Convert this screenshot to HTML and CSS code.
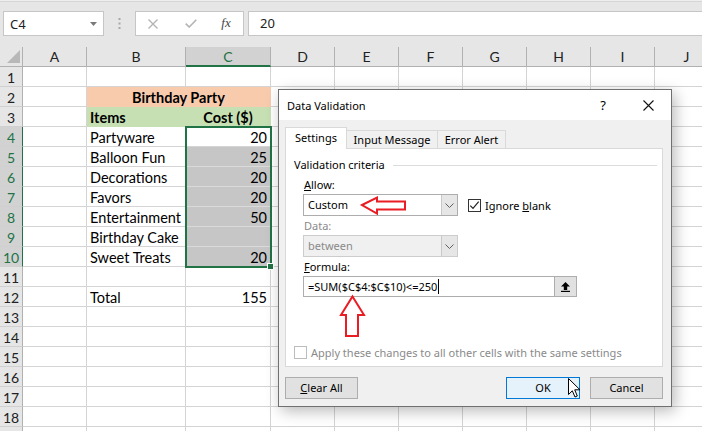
FILE: index.html
```html
<!DOCTYPE html>
<html>
<head>
<meta charset="utf-8">
<link rel="stylesheet" href="styles.css">
</head>
<body>
<div class="fbar">
  <div class="namebox"><span>C4</span><svg class="nbcaret" width="7" height="4" viewBox="0 0 7 4"><path d="M0 0h7L3.5 4z" fill="#7a7a7a"/></svg></div>
  <div class="dots"><svg width="3" height="11" viewBox="0 0 3 11"><rect x="0.5" y="0" width="2" height="2" fill="#a8a8a8"/><rect x="0.5" y="4.5" width="2" height="2" fill="#a8a8a8"/><rect x="0.5" y="9" width="2" height="2" fill="#a8a8a8"/></svg></div>
  <div class="fxbox">
    <span class="fxi fx1"><svg width="10" height="10" viewBox="0 0 10 10"><path d="M.5.5l9 9M9.5.5l-9 9" stroke="#b4b4b4" stroke-width="1.4"/></svg></span>
    <span class="fxi fx2"><svg width="12" height="9" viewBox="0 0 12 9"><path d="M.7 4.6 4.2 8 11.3.7" fill="none" stroke="#b4b4b4" stroke-width="1.6"/></svg></span>
    <span class="fxi fx3">fx</span>
  </div>
  <div class="finput">20</div>
</div>

<div class="sheet">
  <div class="ch corner"><svg width="13" height="13" viewBox="0 0 13 13"><path d="M13 0v13H0z" fill="#b8b8b8"/></svg></div>
  <div class="ch">A</div><div class="ch">B</div><div class="ch s">C</div><div class="ch">D</div><div class="ch">E</div><div class="ch">F</div><div class="ch">G</div><div class="ch">H</div><div class="ch">I</div><div class="ch">J</div>

  <div class="rh">1</div><div></div><div></div><div></div><div></div><div></div><div></div><div></div><div></div><div></div><div></div>
  <div class="rh">2</div><div></div><div class="title2">Birthday Party</div><div></div><div></div><div></div><div></div><div></div><div></div><div></div>
  <div class="rh">3</div><div></div><div class="hd3">Items</div><div class="hd3 ctr">Cost ($)</div><div></div><div></div><div></div><div></div><div></div><div></div><div></div>
  <div class="rh s">4</div><div></div><div>Partyware</div><div class="n">20</div><div></div><div></div><div></div><div></div><div></div><div></div><div></div>
  <div class="rh s">5</div><div></div><div>Balloon Fun</div><div class="n g">25</div><div></div><div></div><div></div><div></div><div></div><div></div><div></div>
  <div class="rh s">6</div><div></div><div>Decorations</div><div class="n g">20</div><div></div><div></div><div></div><div></div><div></div><div></div><div></div>
  <div class="rh s">7</div><div></div><div>Favors</div><div class="n g">20</div><div></div><div></div><div></div><div></div><div></div><div></div><div></div>
  <div class="rh s">8</div><div></div><div>Entertainment</div><div class="n g">50</div><div></div><div></div><div></div><div></div><div></div><div></div><div></div>
  <div class="rh s">9</div><div></div><div>Birthday Cake</div><div class="n g"></div><div></div><div></div><div></div><div></div><div></div><div></div><div></div>
  <div class="rh s">10</div><div></div><div>Sweet Treats</div><div class="n g">20</div><div></div><div></div><div></div><div></div><div></div><div></div><div></div>
  <div class="rh">11</div><div></div><div></div><div></div><div></div><div></div><div></div><div></div><div></div><div></div><div></div>
  <div class="rh">12</div><div></div><div>Total</div><div class="n">155</div><div></div><div></div><div></div><div></div><div></div><div></div><div></div>
  <div class="rh">13</div><div></div><div></div><div></div><div></div><div></div><div></div><div></div><div></div><div></div><div></div>
  <div class="rh">14</div><div></div><div></div><div></div><div></div><div></div><div></div><div></div><div></div><div></div><div></div>
  <div class="rh">15</div><div></div><div></div><div></div><div></div><div></div><div></div><div></div><div></div><div></div><div></div>
  <div class="rh">16</div><div></div><div></div><div></div><div></div><div></div><div></div><div></div><div></div><div></div><div></div>
  <div class="rh">17</div><div></div><div></div><div></div><div></div><div></div><div></div><div></div><div></div><div></div><div></div>
  <div class="rh">18</div><div></div><div></div><div></div><div></div><div></div><div></div><div></div><div></div><div></div><div></div>
  <div class="rh"></div><div></div><div></div><div></div><div></div><div></div><div></div><div></div><div></div><div></div><div></div>
</div>

<div class="selbox"><span class="handle"></span></div>

<div class="dlg">
  <div class="ttl">
    <span class="tt">Data Validation</span>
    <span class="help">?</span>
    <span class="close"><svg width="11" height="11" viewBox="0 0 11 11"><path d="M.5.5l10 10M10.5.5l-10 10" stroke="#111" stroke-width="1.1"/></svg></span>
  </div>
  <div class="dbody">
    <div class="tabs">
      <div class="tab on">Settings</div>
      <div class="tab">Input Message</div>
      <div class="tab">Error Alert</div>
    </div>
    <div class="panel">
      <div class="legend"><span>Validation criteria</span><i class="rule"></i></div>
      <div class="fields">
        <div class="lbl l1"><u>A</u>llow:</div>
        <div class="arow">
          <div class="dsel"><span class="sv">Custom</span><b class="dd"><svg width="9" height="5" viewBox="0 0 9 5"><path d="M.5.5 4.5 4.5 8.5.5" fill="none" stroke="#606060"/></svg></b></div>
          <div class="cb"><span class="box"><svg width="11" height="11" viewBox="0 0 11 11"><path d="M1.3 5.6 4 8.4 9.7 1.6" fill="none" stroke="#222" stroke-width="1.2"/></svg></span><span>Ignore <u>b</u>lank</span></div>
        </div>
        <div class="lbl dis l2">Data:</div>
        <div class="dsel off"><span class="sv">between</span><b class="dd"><svg width="9" height="5" viewBox="0 0 9 5"><path d="M.5.5 4.5 4.5 8.5.5" fill="none" stroke="#606060"/></svg></b></div>
        <div class="lbl l2"><u>F</u>ormula:</div>
        <div class="fin"><span class="ftxt">=SUM($C$4:$C$10)&lt;=250</span><span class="tcaret"></span><b class="ref"><svg width="9" height="10" viewBox="0 0 9 10"><path d="M4.5 0 0 4.5h2.8V8h3.4V4.5H9z" fill="#000"/><rect x="0" y="8.8" width="9" height="1.2" fill="#000"/></svg></b></div>
      </div>
      <div class="apply"><span class="box dis"></span><span>Apply these changes to all other cells with the same settings</span></div>
    </div>
    <div class="btns">
      <div class="btn"><u>C</u>lear All</div>
      <span class="sp"></span>
      <div class="btn ok">OK</div>
      <div class="btn">Cancel</div>
    </div>
  </div>
</div>

<svg class="marks" width="702" height="431" viewBox="0 0 702 431">
  <path d="M362 205 377 197.5V201.5H405V209.5H377V213.5Z" fill="#fff" stroke="#ea1c24" stroke-width="2" stroke-linejoin="miter"/>
  <path d="M352.5 296.5 364 315H358V336H346V315H341Z" fill="#fff" stroke="#ea1c24" stroke-width="2" stroke-linejoin="miter"/>
  <path d="M568.5 378.5V394.5L572.3 390.8 575 397 577.3 396 574.7 389.8H580Z" fill="#fff" stroke="#000" stroke-width="1" stroke-linejoin="round"/>
</svg>
</body>
</html>
```

FILE: styles.css
```css
* { box-sizing: border-box; margin: 0; padding: 0; }
html, body { width: 702px; height: 431px; overflow: hidden; }
body { background: #fff; position: relative; font-family: "Lato", sans-serif; }

/* formula bar */
.fbar {
  height: 47px;
  background: linear-gradient(#eeeeee 0, #eeeeee 1px, #d6d6d6 1px, #d6d6d6 2px, #e6e6e6 2px);
  display: flex;
  align-items: flex-start;
  padding-top: 11px;
  font-family: "Noto Sans", sans-serif;
  font-size: 13px;
  color: #222;
}
.namebox {
  margin-left: 3px;
  width: 101px;
  height: 25px;
  background: #fff;
  border: 1px solid #c6c6c6;
  display: flex;
  align-items: center;
  justify-content: space-between;
  padding: 0 6px 0 6px;
}
.dots { width: 31px; height: 25px; display: flex; align-items: center; justify-content: center; }
.fxbox {
  width: 109px;
  height: 25px;
  background: #fff;
  border: 1px solid #c6c6c6;
  display: flex;
  align-items: center;
}
.fxi { display: flex; justify-content: center; align-items: center; height: 23px; }
.fx1 { width: 34px; }
.fx2 { width: 42px; }
.fx3 { width: 28px; font-family: "Liberation Serif", serif; font-style: italic; font-size: 13px; color: #444; padding-bottom: 2px; }
.finput {
  margin-left: 4px;
  flex: 1;
  height: 25px;
  background: #fff;
  border: 1px solid #c6c6c6;
  border-right: none;
  padding-left: 11px;
  line-height: 23px;
}

/* sheet */
.sheet {
  display: grid;
  grid-template-columns: 23px 64px 99px 85px 64px 64px 64px 64px 64px 64px 64px;
  grid-auto-rows: 20px;
  font-size: 14.5px;
  line-height: 21px;
  color: #000;
}
.sheet > div {
  border-right: 1px solid #d4d4d4;
  border-bottom: 1px solid #d4d4d4;
  padding: 0 3px;
  white-space: nowrap;
  overflow: hidden;
}
.sheet > .ch {
  background: #e6e6e6;
  border-right-color: #b1b1b1;
  border-bottom-color: #b1b1b1;
  text-align: center;
  color: #222;
  font-size: 14px;
  line-height: 19px;
}
.sheet > .ch.s { background: #d2d2d2; color: #217346; border-bottom: 2px solid #217346; }
.sheet > .corner { display: flex; align-items: flex-end; justify-content: flex-end; padding: 0 2px 3px 0; }
.sheet > .rh {
  background: #e6e6e6;
  border-right-color: #b1b1b1;
  border-bottom-color: #d0d0d0;
  text-align: center;
  color: #222;
  padding: 0;
  font-size: 14px;
}
.sheet > .rh.s { background: #d2d2d2; color: #217346; border-right-color: #217346; }
.sheet > .n { text-align: right; }
.sheet > .g { background: #c6c6c6; border-bottom-color: #dadada; }
.sheet > .title2 {
  grid-column: span 2;
  background: #f8cbad;
  border-color: #f8cbad;
  text-align: center;
  font-weight: bold;
}
.sheet > .hd3 { background: #c6e0b4; border-color: #c6e0b4; font-weight: bold; }
.sheet > .hd3.ctr { text-align: center; }

.selbox {
  position: absolute;
  left: 185px;
  top: 126px;
  width: 87px;
  height: 142px;
  border: 2px solid #217346;
}
.handle {
  position: absolute;
  right: -4px;
  bottom: -4px;
  width: 7px;
  height: 7px;
  background: #217346;
  border: 1px solid #fff;
}

/* dialog */
.dlg {
  position: absolute;
  left: 278px;
  top: 89px;
  width: 394px;
  height: 318px;
  background: #f0f0f0;
  border: 1px solid #707070;
  box-shadow: 3px 4px 14px rgba(0, 0, 0, 0.28);
  font-family: "Noto Sans", sans-serif;
  font-size: 11px;
  color: #000;
  display: flex;
  flex-direction: column;
}
.ttl {
  height: 30px;
  background: #fff;
  display: flex;
  align-items: center;
  padding-left: 8px;
}
.tt { flex: 1; }
.help { width: 20px; text-align: center; font-size: 13px; }
.close { width: 20px; margin-left: 25px; margin-right: 13px; display: flex; justify-content: center; }
.dbody { flex: 1; padding: 7px 8px 0 6px; display: flex; flex-direction: column; }
.tabs { height: 21px; display: flex; align-items: flex-end; position: relative; z-index: 1; }
.tab {
  height: 18px;
  border: 1px solid #d9d9d9;
  border-bottom: none;
  background: #f0f0f0;
  line-height: 17px;
  text-align: center;
  margin-left: -1px;
}
.tab:nth-child(1) { width: 62px; margin-left: 0; }
.tab:nth-child(2) { width: 92px; }
.tab:nth-child(3) { width: 69px; }
.tab.on { height: 22px; background: #fff; margin-bottom: -1px; line-height: 20px; padding-bottom: 1px; }

.panel {
  height: 219px;
  background: #fff;
  border: 1px solid #d9d9d9;
  padding: 8px 5px 0 8px;
}
.legend { display: flex; align-items: center; height: 16px; line-height: 16px; }
.rule { flex: 1; height: 1px; background: #dcdcdc; margin-left: 8px; }
.fields { padding-left: 9px; }
.lbl { height: 16px; line-height: 16px; padding-left: 1px; }
.l1 { margin-top: 4px; margin-bottom: 1px; }
.l2 { margin-top: 2px; margin-bottom: 1px; }
.dis { color: #8a8a8a; }
.arow { display: flex; align-items: center; }
.dsel {
  width: 155px;
  height: 22px;
  background: #fff;
  border: 1px solid #adadad;
  display: flex;
  align-items: stretch;
}
.dsel .sv { flex: 1; padding-left: 4px; line-height: 20px; }
.dsel .dd {
  width: 16px;
  background: #e6e6e6;
  border-left: 1px solid #c8c8c8;
  display: flex;
  align-items: center;
  justify-content: center;
}
.dsel.off { background: #f0f0f0; border-color: #cccccc; color: #8a8a8a; }
.cb { display: flex; align-items: center; margin-left: 10px; }
.box {
  width: 13px;
  height: 13px;
  border: 1px solid #333;
  background: #fff;
  display: flex;
  align-items: center;
  justify-content: center;
  margin-right: 4px;
}
.box.dis { border-color: #bcbcbc; }
.fin {
  width: 274px;
  height: 21px;
  background: #fff;
  border: 1px solid #adadad;
  display: flex;
  align-items: center;
}
.ftxt { padding-left: 4px; line-height: 19px; }
.tcaret { width: 1px; height: 15px; background: #000; margin-left: 1px; }
.ref {
  margin-left: auto;
  width: 22px;
  height: 19px;
  background: #e1e1e1;
  border-left: 1px solid #adadad;
  display: flex;
  align-items: center;
  justify-content: center;
}
.apply { display: flex; align-items: center; margin-top: 47px; color: #8a8a8a; height: 16px; }

.btns { display: flex; margin-top: 10px; }
.sp { flex: 1; }
.btn {
  width: 73px;
  height: 22px;
  background: #e1e1e1;
  border: 1px solid #adadad;
  text-align: center;
  line-height: 20px;
}
.btn.ok { width: 74px; background: #e5f1fb; border-color: #0078d7; margin-right: 10px; }

.marks { position: absolute; left: 0; top: 0; pointer-events: none; }
```
